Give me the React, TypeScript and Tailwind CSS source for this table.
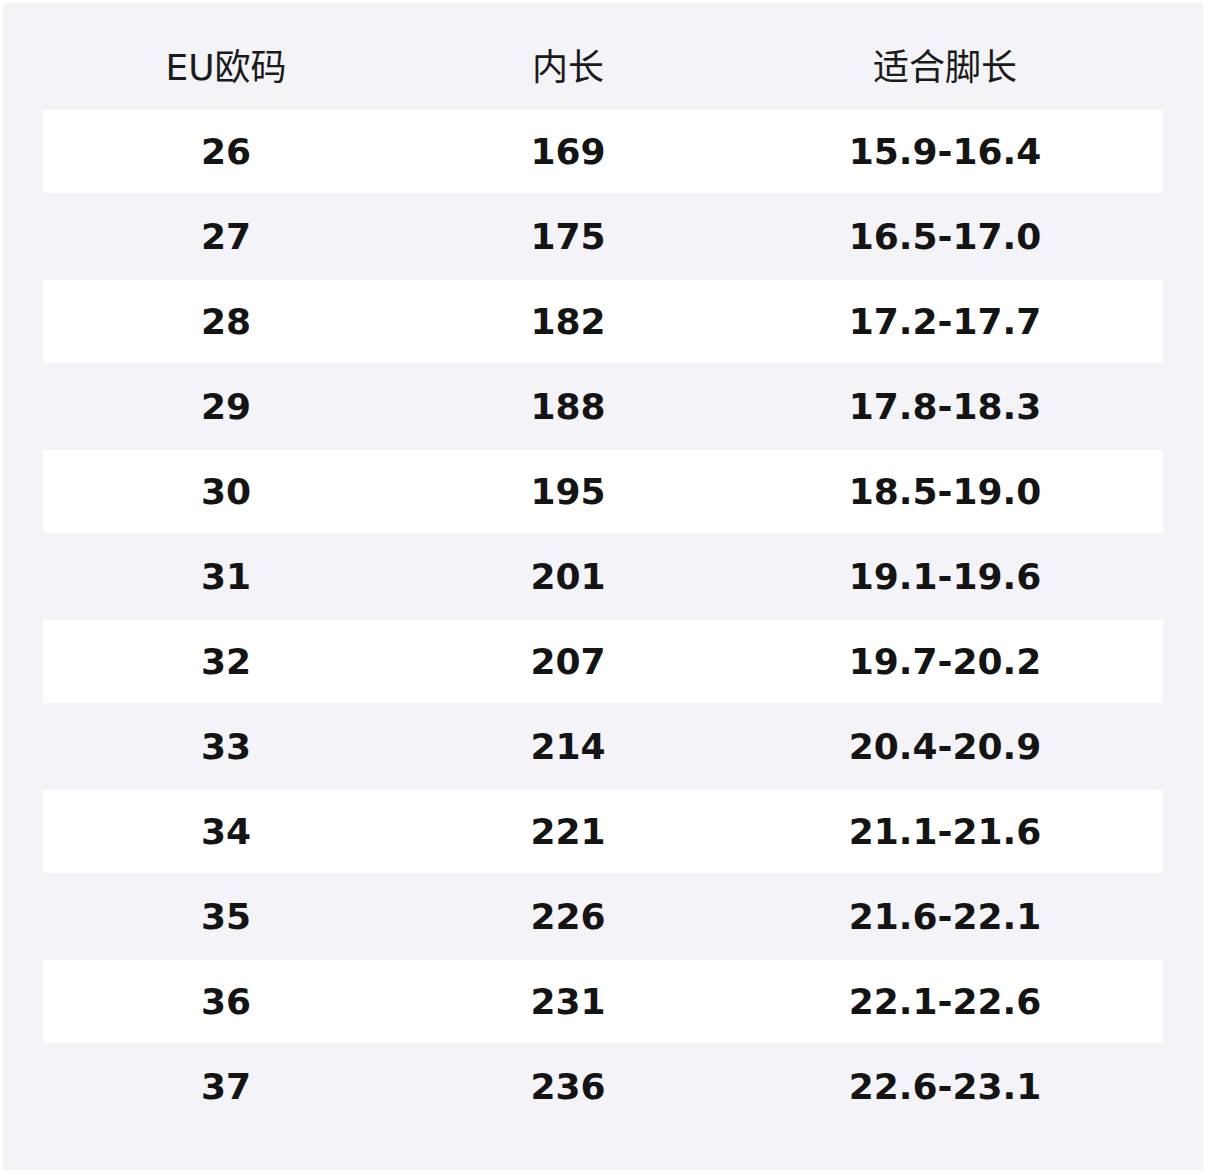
const rows = [
  ["26", "169", "15.9-16.4"],
  ["27", "175", "16.5-17.0"],
  ["28", "182", "17.2-17.7"],
  ["29", "188", "17.8-18.3"],
  ["30", "195", "18.5-19.0"],
  ["31", "201", "19.1-19.6"],
  ["32", "207", "19.7-20.2"],
  ["33", "214", "20.4-20.9"],
  ["34", "221", "21.1-21.6"],
  ["35", "226", "21.6-22.1"],
  ["36", "231", "22.1-22.6"],
  ["37", "236", "22.6-23.1"],
];

export default function App() {
  return (
    <div className="bg-white w-[1206px] h-[1173px] p-[3px]" style={{ fontFamily: '"DejaVu Sans", "Noto Sans CJK SC", sans-serif' }}>
      <div className="bg-[#f3f3f8] w-[1200px] h-[1167px] px-10">
        {/* Header */}
        <div className="h-[106px] pt-[24px] grid grid-cols-[366px_318px_436px] items-center text-[36px] text-[#1a1a1a]">
          <div className="text-center">EU欧码</div>
          <div className="text-center">内长</div>
          <div className="text-center">适合脚长</div>
        </div>

        {/* Rows */}
        {rows.map((r, i) => (
          <div key={i} className="py-px">
            <div
              className={`h-[83px] grid grid-cols-[366px_318px_436px] items-center text-[36px] font-bold text-[#141414] ${
                i % 2 === 0 ? "bg-white" : ""
              }`}
            >
              <div className="text-center">{r[0]}</div>
              <div className="text-center">{r[1]}</div>
              <div className="text-center">{r[2]}</div>
            </div>
          </div>
        ))}
      </div>
    </div>
  );
}
